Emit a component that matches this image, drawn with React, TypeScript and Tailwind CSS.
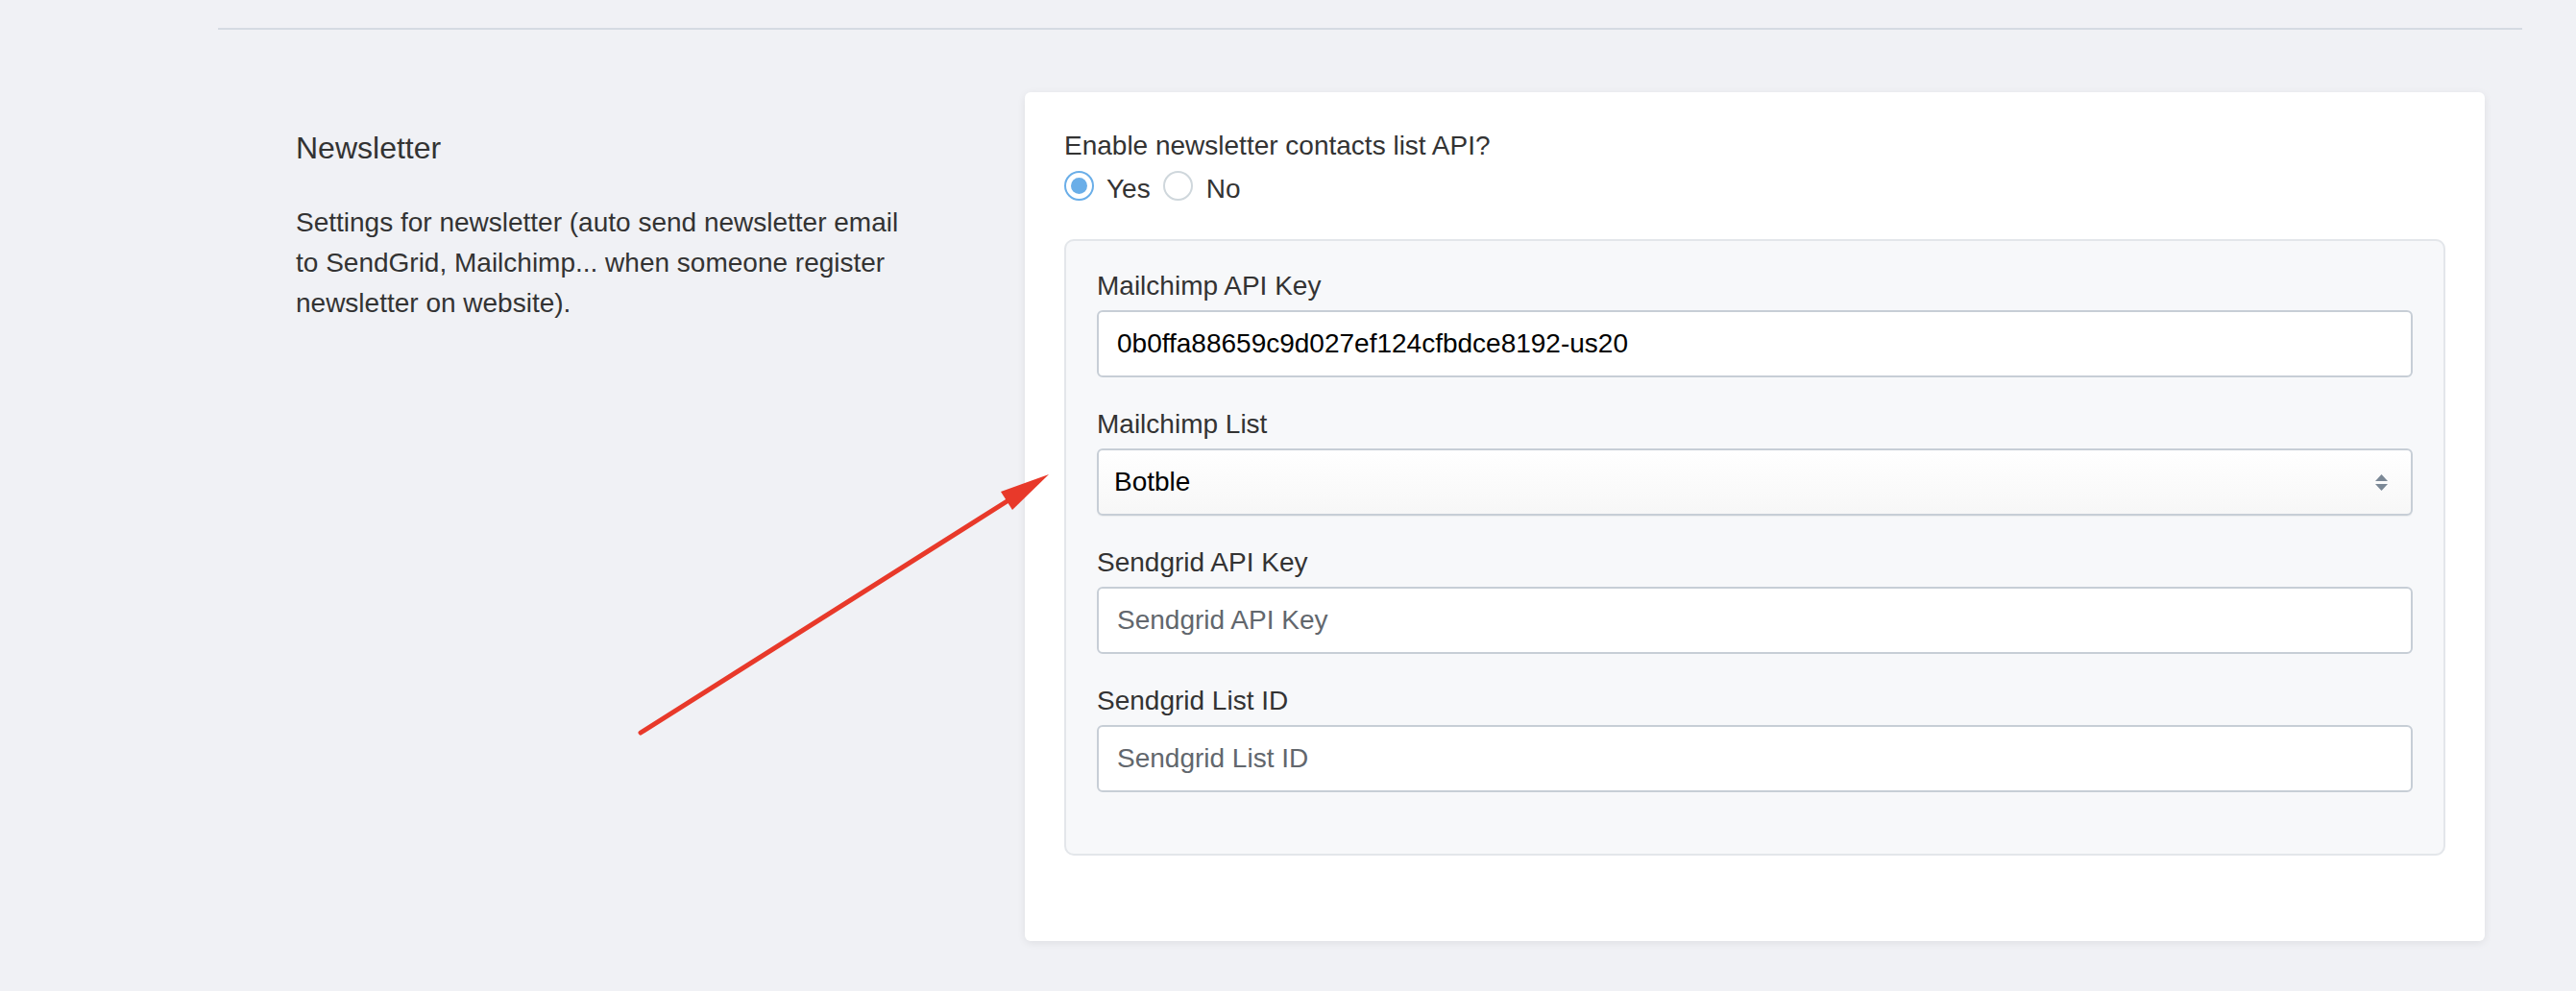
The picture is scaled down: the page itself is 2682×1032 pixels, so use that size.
import React from "react";

const fields = [
  { label: "Mailchimp API Key", value: "0b0ffa88659c9d027ef124cfbdce8192-us20", type: "input" },
  { label: "Mailchimp List", value: "Botble", type: "select" },
  { label: "Sendgrid API Key", placeholder: "Sendgrid API Key", type: "input" },
  { label: "Sendgrid List ID", placeholder: "Sendgrid List ID", type: "input" },
];

function Radio({ checked }: { checked?: boolean }) {
  return (
    <span
      className={
        checked
          ? "mt-[2px] flex h-[31px] w-[31px] shrink-0 items-center justify-center rounded-full border-2 border-[#6aaee8] bg-white"
          : "mt-[2px] flex h-[31px] w-[31px] shrink-0 items-center justify-center rounded-full border-2 border-[#cfd7dc] bg-white"
      }
    >
      {checked && <span className="h-[17px] w-[17px] rounded-full bg-[#6aaee8]" />}
    </span>
  );
}

function SelectArrows() {
  return (
    <svg width="13" height="17" viewBox="0 0 13 17" className="mr-[24px]">
      <path d="M6.5 0 L13 7 L0 7 Z" fill="#7b8896" />
      <path d="M0 10 L13 10 L6.5 17 Z" fill="#7b8896" />
    </svg>
  );
}

export default function App() {
  return (
    <div className="relative min-h-[1032px] w-[2682px] overflow-hidden bg-[#f0f1f5] font-['Liberation_Sans',Arial,sans-serif] text-[#333]">
      <div className="pl-[227px] pr-[56px] pt-[29px]">
        <div className="border-t-2 border-[#d5dbe2]" />
      </div>

      <div className="mt-[65px] flex">
        {/* Left description column */}
        <div className="w-[1067px] shrink-0 pl-[308px] pt-[39px]">
          <h2 className="text-[32px] leading-[38px] font-normal">Newsletter</h2>
          <p className="mt-[38px] w-[640px] text-[28px] leading-[42px]">
            Settings for newsletter (auto send newsletter email to SendGrid, Mailchimp... when someone register newsletter on website).
          </p>
        </div>

        {/* Settings card */}
        <div className="w-[1520px] shrink-0 rounded-[6px] bg-white px-[41px] pt-[35px] pb-[89px] shadow-[0_2px_8px_rgba(0,0,0,0.08)]">
          <div className="text-[28px] leading-[42px]">Enable newsletter contacts list API?</div>
          <div className="mt-[3px] flex h-[42px] items-start text-[28px] leading-[42px]">
            <Radio checked />
            <span className="ml-[13px]">Yes</span>
            <span className="ml-[13px]">
              <Radio />
            </span>
            <span className="ml-[14px]">No</span>
          </div>

          <div className="mt-[31px] rounded-[10px] border-2 border-[#e3e6ea] bg-[#f7f8fa] px-[32px] pt-[26px] pb-[36px]">
            {fields.map((f) => (
              <div key={f.label} className="mb-[28px]">
                <div className="mb-[4px] text-[28px] leading-[42px]">{f.label}</div>
                {f.type === "select" ? (
                  <div className="flex h-[70px] items-center justify-between rounded-[6px] border-2 border-[#c7ced6] bg-gradient-to-b from-white to-[#f7f7f7] pl-[16px] text-[28px] text-black shadow-[0_1px_1px_rgba(0,0,0,0.05)]">
                    <span>{f.value}</span>
                    <SelectArrows />
                  </div>
                ) : (
                  <input
                    readOnly
                    defaultValue={f.value}
                    placeholder={f.placeholder}
                    className="block h-[70px] w-full rounded-[6px] border-2 border-[#c7ced6] bg-white pl-[19px] text-[28px] text-black outline-none placeholder:text-[#62676d]"
                  />
                )}
              </div>
            ))}
          </div>
        </div>
      </div>

      {/* Annotation arrow */}
      <svg
        className="pointer-events-none absolute left-0 top-0"
        width="2682"
        height="1032"
        viewBox="0 0 2682 1032"
      >
        <line x1="667" y1="763" x2="1050" y2="521" stroke="#e8392a" strokeWidth="5" strokeLinecap="round" />
        <polygon points="1092,494 1042,512 1054,531" fill="#e8392a" />
      </svg>
    </div>
  );
}
